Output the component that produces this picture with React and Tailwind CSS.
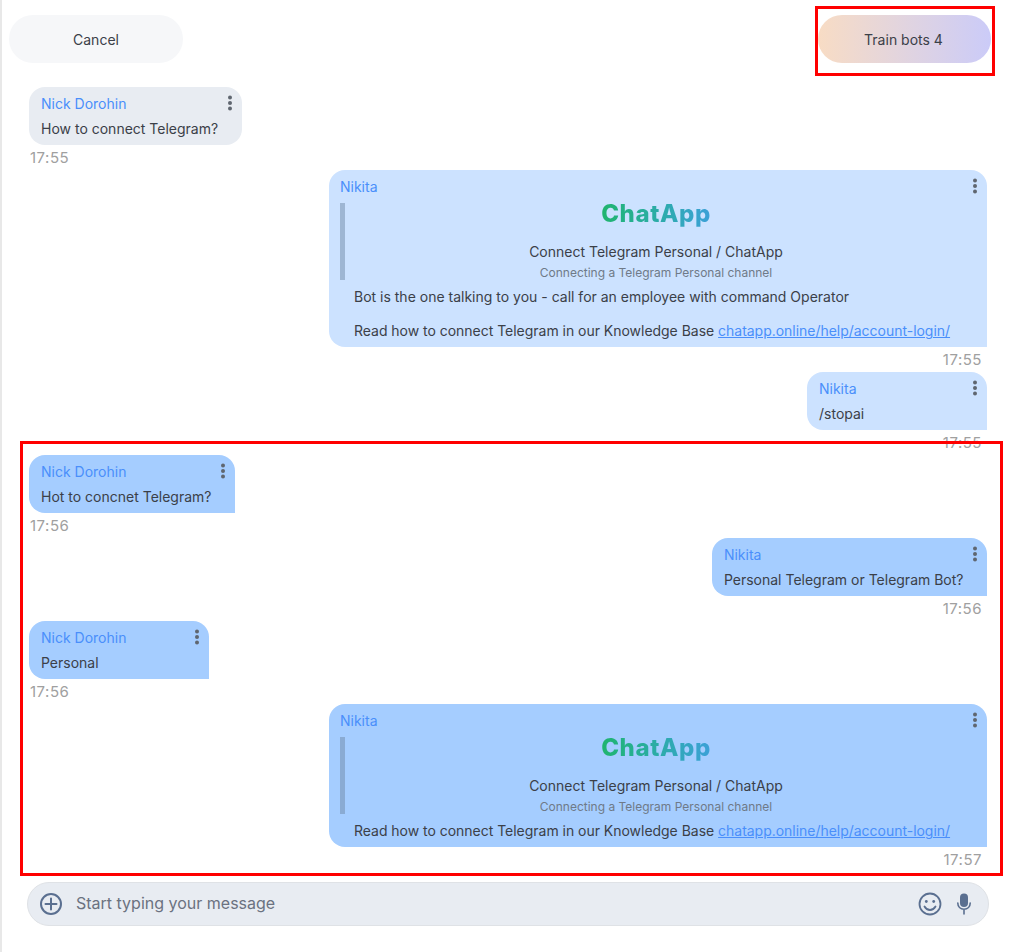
const font = { fontFamily: 'Inter, sans-serif' }

function Dots() {
  return (
    <svg width="4" height="16" viewBox="0 0 4 16" className="absolute top-[8px] right-[10px] text-[#5f6670]" fill="currentColor">
      <circle cx="2" cy="2.5" r="2" />
      <circle cx="2" cy="8" r="2" />
      <circle cx="2" cy="13.5" r="2" />
    </svg>
  )
}

function Time({ children, right }) {
  return (
    <div className={`h-[25px] pt-px flex items-center text-[15px] leading-5 tracking-[0.5px] text-[#a0a0a0] ${right ? 'justify-end pr-[5px]' : 'pl-px'}`}>
      {children}
    </div>
  )
}

function Bubble({ name, text, time, right, strong }) {
  const bg = strong ? 'bg-[#a5cdff]' : right ? 'bg-[#cce2ff]' : 'bg-[#e8ecf2]'
  const shape = right || strong ? 'rounded-2xl rounded-br-none' : 'rounded-2xl'
  return (
    <div className={`flex flex-col ${right ? 'items-end' : 'items-start'}`}>
      <div className={`relative min-w-[180px] pl-3 pr-[23.5px] pt-[7px] pb-[6px] ${bg} ${shape}`}>
        <div className="text-sm leading-5 text-[#4a8ffb]">{name}</div>
        <div className="mt-[5px] text-sm leading-5 text-[#3b4048]">{text}</div>
        <Dots />
      </div>
      <Time right={right}>{time}</Time>
    </div>
  )
}

function ArticleBubble({ strong, extra, time }) {
  return (
    <div className="flex flex-col items-end">
      <div className={`relative w-[658px] pl-[11px] pr-5 pt-[7px] pb-[6px] rounded-2xl rounded-br-none ${strong ? 'bg-[#a5cdff]' : 'bg-[#cce2ff]'}`}>
        <div className="text-sm leading-5 text-[#4a8ffb]">Nikita</div>
        <div className="mt-[6px] h-[77px] border-l-[5px] border-[#6f8aa8]/50 flex flex-col items-center">
          <div className="-mt-[4px] h-[29px] flex items-center text-2xl font-extrabold tracking-[0.6px] text-transparent bg-clip-text bg-gradient-to-r from-[#20b46c] to-[#3ca0d8]">ChatApp</div>
          <div className="mt-[14px] text-sm leading-5 text-[#3b4048]">Connect Telegram Personal / ChatApp</div>
          <div className="mt-[3px] text-xs leading-4 text-[#6f7a88]">Connecting a Telegram Personal channel</div>
        </div>
        <div className="mt-[7px] ml-[14px] text-sm leading-5 text-[#3b4048]">
          {extra && (
            <div className="mb-[14px]">Bot is the one talking to you - call for an employee with command Operator</div>
          )}
          <div className="tracking-[-0.025px]">
            Read how to connect Telegram in our Knowledge Base{' '}
            <a className="text-[#4a8ffb] underline" href="#">chatapp.online/help/account-login/</a>
          </div>
        </div>
        <Dots />
      </div>
      <Time right>{time}</Time>
    </div>
  )
}

export default function App() {
  return (
    <div style={font} className="relative h-[952px] w-[1015px] overflow-hidden bg-white border-l-2 border-[#e8e8e8]">
      {/* Header */}
      <div className="flex justify-between pl-[7px] pr-[24px] pt-[15px]">
        <button className="w-[174px] h-12 pt-px rounded-3xl bg-[#f6f7f9] text-sm text-[#3b4048]">Cancel</button>
        <button className="w-[173px] h-12 pt-px pr-[2px] rounded-3xl bg-gradient-to-r from-[#f8dcc4] to-[#cbcbf8] text-sm text-[#3b4048]">Train bots 4</button>
      </div>

      {/* Messages */}
      <div className="flex flex-col pl-[27px] pr-[28px] pt-6">
        <Bubble name="Nick Dorohin" text="How to connect Telegram?" time="17:55" />
        <ArticleBubble extra time="17:55" />
        <Bubble right name="Nikita" text="/stopai" time="17:55" />
        <Bubble strong name="Nick Dorohin" text="Hot to concnet Telegram?" time="17:56" />
        <Bubble right strong name="Nikita" text="Personal Telegram or Telegram Bot?" time="17:56" />
        <Bubble strong name="Nick Dorohin" text="Personal" time="17:56" />
        <ArticleBubble strong time="17:57" />
      </div>

      {/* Input */}
      <div className="ml-[25px] mt-[10px] w-[962px] h-[44px] flex items-center rounded-full bg-[#e8ecf2] border border-[#dfe2e6] pl-[11px] pr-[17px]">
        <svg width="24" height="24" viewBox="0 0 24 24" fill="none" stroke="#5a6f90" strokeWidth="2" strokeLinecap="round">
          <circle cx="12" cy="12" r="10" />
          <path d="M12 6.5v11M6.5 12h11" />
        </svg>
        <span className="ml-[13px] pb-[2px] flex-1 text-base text-[#6b7280]">Start typing your message</span>
        <svg width="24" height="24" viewBox="0 0 24 24" fill="none" stroke="#5a6f90" strokeWidth="1.8" strokeLinecap="round">
          <circle cx="12" cy="12" r="10.5" />
          <circle cx="8.3" cy="9.5" r="1.4" fill="#5a6f90" stroke="none" />
          <circle cx="15.7" cy="9.5" r="1.4" fill="#5a6f90" stroke="none" />
          <path d="M6.5 14.5c1.4 2.4 3.3 3.5 5.5 3.5s4.1-1.1 5.5-3.5" />
        </svg>
        <svg className="ml-[15px]" width="14" height="22" viewBox="0 0 14 22" fill="none" stroke="#5a6f90" strokeWidth="1.6" strokeLinecap="round">
          <rect x="3" y="0.5" width="8" height="13.5" rx="4" fill="#5a6f90" stroke="none" />
          <path d="M0.8 10c0 3.8 2.6 6.2 6.2 6.2s6.2-2.4 6.2-6.2M7 16.2V21" />
        </svg>
      </div>

      {/* Annotation frames */}
      <div className="absolute left-[813px] top-[6px] w-[180px] h-[70px] border-[3px] border-[#ff0000]" />
      <div className="absolute left-[18px] top-[441px] w-[983px] h-[435px] border-[3px] border-[#ff0000]" />
    </div>
  )
}
